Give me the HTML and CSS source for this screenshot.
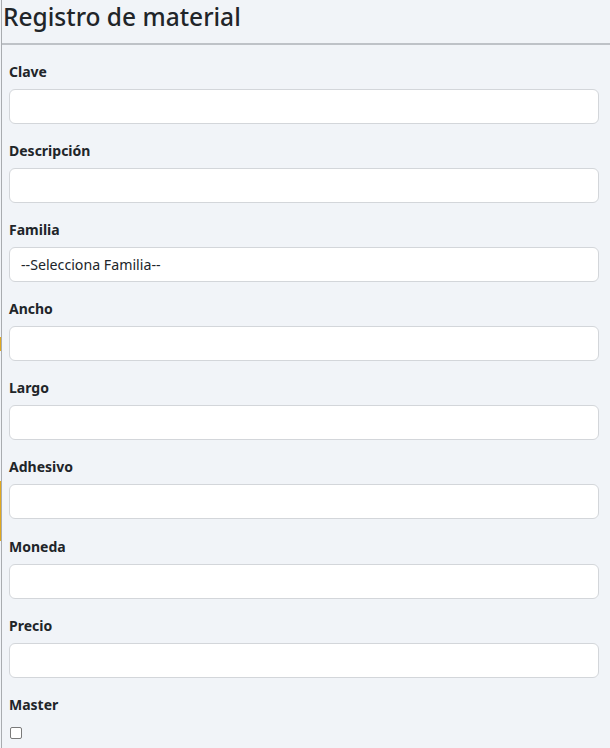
FILE: index.html
```html
<!DOCTYPE html>
<html lang="es">
<head>
  <meta charset="UTF-8" />
  <meta name="viewport" content="width=device-width, initial-scale=1.0"/>
  <title>Registro de material</title>
  <link rel="stylesheet" href="styles.css">
</head>
<body>
  <div class="page">
    <div class="edge">
      <span class="edge-gap"></span>
      <span class="edge-yellow one"></span>
      <span class="edge-gap two"></span>
      <span class="edge-yellow three"></span>
    </div>

    <div class="panel">
      <div class="panel-header">
        <h4>Registro de material</h4>
      </div>

      <form id="material-form" class="panel-body">
        <div class="field">
          <label for="clave">Clave</label>
          <input type="text" id="clave" name="clave" />
        </div>

        <div class="field">
          <label for="descripcion">Descripción</label>
          <input type="text" id="descripcion" name="descripcion" />
        </div>

        <div class="field">
          <label for="familia">Familia</label>
          <select id="familia" name="familia">
            <option>--Selecciona Familia--</option>
          </select>
        </div>

        <div class="field">
          <label for="ancho">Ancho</label>
          <input type="text" id="ancho" name="ancho" />
        </div>

        <div class="field">
          <label for="largo">Largo</label>
          <input type="text" id="largo" name="largo" />
        </div>

        <div class="field">
          <label for="adhesivo">Adhesivo</label>
          <input type="text" id="adhesivo" name="adhesivo" />
        </div>

        <div class="field">
          <label for="moneda">Moneda</label>
          <input type="text" id="moneda" name="moneda" />
        </div>

        <div class="field">
          <label for="precio">Precio</label>
          <input type="text" id="precio" name="precio" />
        </div>

        <div class="field">
          <label for="master">Master</label>
          <input type="checkbox" id="master" name="master" class="check" />
        </div>
      </form>
    </div>
  </div>
</body>
</html>
```

FILE: styles.css
```css
* {
  box-sizing: border-box;
}

body {
  margin: 0;
  font-family: 'Noto Sans', 'Open Sans', sans-serif;
  background-color: #f1f4f8;
  color: #212529;
  overflow: hidden;
}

.page {
  display: flex;
  min-height: 748px;
}

.edge {
  width: 1px;
  display: flex;
  flex-direction: column;
  background-color: #f1f4f8;
}

.edge-gap {
  height: 337px;
}

.edge-yellow {
  background-color: #e0a81e;
}

.edge-yellow.one {
  height: 14px;
}

.edge-gap.two {
  height: 130px;
}

.edge-yellow.three {
  height: 60px;
}

.panel {
  flex: 1;
  border-left: 1px solid #a9acb0;
}

.panel-header {
  height: 45px;
  border-bottom: 2px solid #bec2c7;
  padding: 1px 0 0 1px;
}

h4 {
  margin: 0;
  font-size: 24.5px;
  font-weight: 500;
  line-height: 31px;
  color: #212529;
}

.panel-body {
  padding: 17px 11px 0 7px;
}

.field {
  margin-bottom: 17.1px;
}

label {
  display: block;
  font-size: 14px;
  font-weight: 700;
  line-height: 20px;
  margin-bottom: 7px;
}

input,
select {
  display: block;
  width: 100%;
  height: 35px;
  padding: 6px 11px;
  font-family: inherit;
  font-size: 14.2px;
  color: #212529;
  background-color: #fff;
  border: 1px solid #d3d6da;
  border-radius: 6px;
  appearance: none;
}

.check {
  width: 12px;
  height: 12px;
  padding: 0;
  margin: 12px 0 0 1px;
  border: 1px solid #7a7a7a;
  border-radius: 2px;
}
```
